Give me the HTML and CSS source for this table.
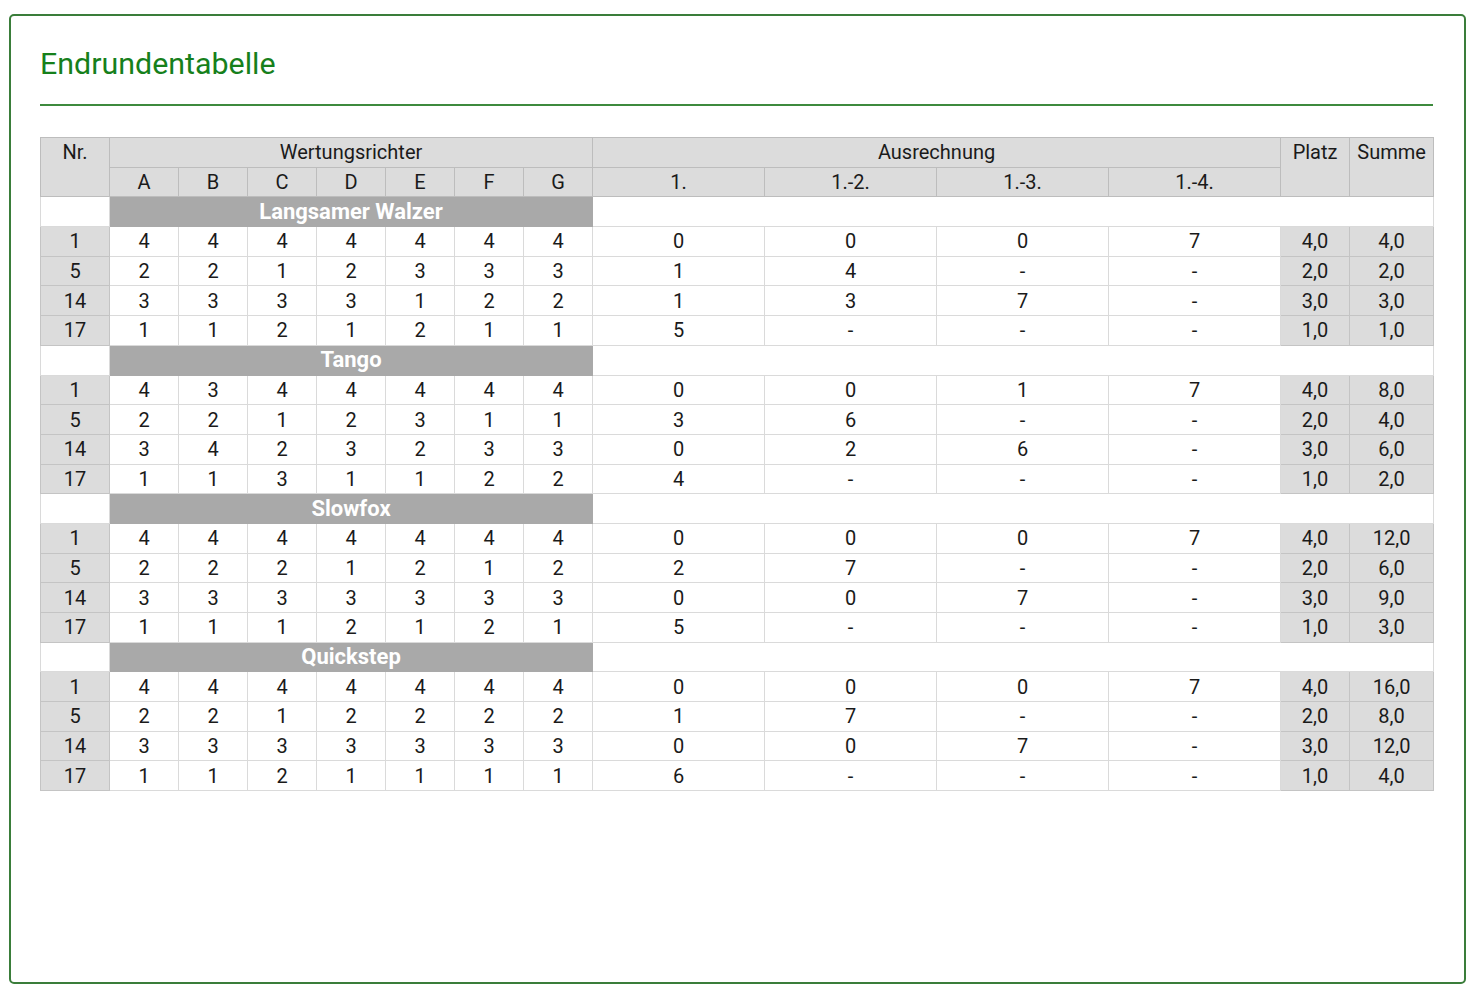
FILE: index.html
```html
<!DOCTYPE html>
<html lang="de">
<head>
<meta charset="utf-8">
<title>Endrundentabelle</title>
<link rel="stylesheet" href="styles.css">
</head>
<body>
<div class="card">
  <h1 class="title">Endrundentabelle</h1>
  <div class="divider"></div>
  <table class="results">
    <colgroup>
      <col class="c-nr">
      <col class="c-j"><col class="c-j"><col class="c-j"><col class="c-j"><col class="c-j"><col class="c-j"><col class="c-j">
      <col class="c-a"><col class="c-a"><col class="c-a"><col class="c-a">
      <col class="c-p">
      <col class="c-s">
    </colgroup>
    <thead>
      <tr>
        <th rowspan="2" class="top">Nr.</th>
        <th colspan="7">Wertungsrichter</th>
        <th colspan="4">Ausrechnung</th>
        <th rowspan="2" class="top">Platz</th>
        <th rowspan="2" class="top">Summe</th>
      </tr>
      <tr>
        <th>A</th><th>B</th><th>C</th><th>D</th><th>E</th><th>F</th><th>G</th>
        <th>1.</th><th>1.-2.</th><th>1.-3.</th><th>1.-4.</th>
      </tr>
    </thead>
    <tbody id="body"></tbody>
  </table>
</div>
<script src="app.js"></script>
</body>
</html>
```
FILE: app.js
```js
const dances = [
  ["Langsamer Walzer", [
    ["1", [4,4,4,4,4,4,4], ["0","0","0","7"], "4,0", "4,0"],
    ["5", [2,2,1,2,3,3,3], ["1","4","-","-"], "2,0", "2,0"],
    ["14", [3,3,3,3,1,2,2], ["1","3","7","-"], "3,0", "3,0"],
    ["17", [1,1,2,1,2,1,1], ["5","-","-","-"], "1,0", "1,0"]
  ]],
  ["Tango", [
    ["1", [4,3,4,4,4,4,4], ["0","0","1","7"], "4,0", "8,0"],
    ["5", [2,2,1,2,3,1,1], ["3","6","-","-"], "2,0", "4,0"],
    ["14", [3,4,2,3,2,3,3], ["0","2","6","-"], "3,0", "6,0"],
    ["17", [1,1,3,1,1,2,2], ["4","-","-","-"], "1,0", "2,0"]
  ]],
  ["Slowfox", [
    ["1", [4,4,4,4,4,4,4], ["0","0","0","7"], "4,0", "12,0"],
    ["5", [2,2,2,1,2,1,2], ["2","7","-","-"], "2,0", "6,0"],
    ["14", [3,3,3,3,3,3,3], ["0","0","7","-"], "3,0", "9,0"],
    ["17", [1,1,1,2,1,2,1], ["5","-","-","-"], "1,0", "3,0"]
  ]],
  ["Quickstep", [
    ["1", [4,4,4,4,4,4,4], ["0","0","0","7"], "4,0", "16,0"],
    ["5", [2,2,1,2,2,2,2], ["1","7","-","-"], "2,0", "8,0"],
    ["14", [3,3,3,3,3,3,3], ["0","0","7","-"], "3,0", "12,0"],
    ["17", [1,1,2,1,1,1,1], ["6","-","-","-"], "1,0", "4,0"]
  ]]
];
const tb = document.getElementById("body");
let html = "";
for (const [name, rows] of dances) {
  html += '<tr class="section"><td class="blank"></td><td colspan="7" class="dance">' + name + '</td><td colspan="6" class="blank"></td></tr>';
  for (const [nr, marks, calc, platz, summe] of rows) {
    html += '<tr><td class="grey">' + nr + '</td>';
    for (const m of marks) html += '<td>' + m + '</td>';
    for (const c of calc) html += '<td>' + c + '</td>';
    html += '<td class="grey">' + platz + '</td><td class="grey">' + summe + '</td></tr>';
  }
}
tb.innerHTML = html;
```
FILE: styles.css
```css
html, body {
  margin: 0;
  padding: 0;
  background: #ffffff;
}
body {
  padding: 14px 16px 18px 9px;
  font-family: Roboto, "Liberation Sans", Arial, sans-serif;
  color: #1a1a1a;
}
.card {
  box-sizing: border-box;
  height: 970px;
  border: 2px solid #3a7d3a;
  border-radius: 5px;
  padding: 30px 31px 0 29px;
}
.title {
  margin: 0;
  font-size: 30.4px;
  line-height: 36px;
  font-weight: 400;
  color: #16801b;
}
.divider {
  height: 2px;
  background: #3d8a3d;
  margin-top: 22px;
}
.results {
  margin-top: 31px;
  width: 1394px;
  border-collapse: collapse;
  table-layout: fixed;
  font-size: 20px;
}
.c-nr { width: 69px; }
.c-j { width: 69px; }
.c-a { width: 172px; }
.c-p { width: 69px; }
.c-s { width: 84px; }
.results th, .results td {
  text-align: center;
  padding: 0;
  height: 28.7px;
  line-height: 22px;
  border: 1px solid #dadada;
}
.results th {
  font-weight: 400;
  background: #dcdcdc;
  border-color: #bdbdbd;
}
.results th.top {
  vertical-align: top;
  padding-top: 3px;
}
.results td.grey {
  background: #dcdcdc;
  border-color: #c4c4c4;
}
.results td.dance {
  background: #a9a9a9;
  color: #ffffff;
  font-weight: 700;
  font-size: 22px;
  border-color: #a9a9a9;
}
.results td.blank {
  background: #ffffff;
}
```
